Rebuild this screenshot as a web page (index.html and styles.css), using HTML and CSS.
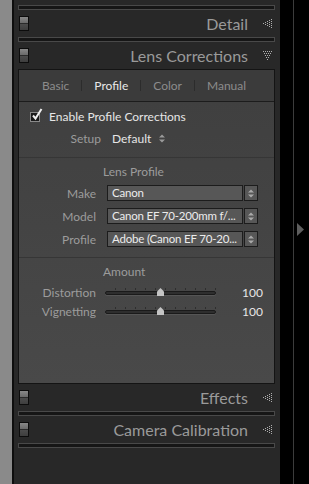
FILE: index.html
```html
<!doctype html>
<html>

<head>
    <title>Lens Corrections</title>
    <link rel="stylesheet" href="styles.css">
</head>

<body>
    <div class="filmstrip"></div>
    <div class="panel">
        <div class="bar"></div>
        <div class="header">
            <span class="toggle"></span>
            <span class="title">Detail</span>
            <svg class="tri" width="9" height="9" viewBox="0 0 9 9">
                <rect x="0" y="4" width="1" height="1" />
                <rect x="2" y="3" width="1" height="1" /><rect x="2" y="5" width="1" height="1" />
                <rect x="4" y="2" width="1" height="1" /><rect x="4" y="4" width="1" height="1" /><rect x="4" y="6" width="1" height="1" />
                <rect x="6" y="1" width="1" height="1" /><rect x="6" y="3" width="1" height="1" /><rect x="6" y="5" width="1" height="1" /><rect x="6" y="7" width="1" height="1" />
                <rect x="8" y="0" width="1" height="1" /><rect x="8" y="2" width="1" height="1" /><rect x="8" y="4" width="1" height="1" /><rect x="8" y="6" width="1" height="1" /><rect x="8" y="8" width="1" height="1" />
            </svg>
        </div>
        <div class="bar"></div>
        <div class="header">
            <span class="toggle"></span>
            <span class="title">Lens Corrections</span>
            <svg class="tri" width="9" height="9" viewBox="0 0 9 9">
                <rect y="0" x="0" width="1" height="1" /><rect y="0" x="2" width="1" height="1" /><rect y="0" x="4" width="1" height="1" /><rect y="0" x="6" width="1" height="1" /><rect y="0" x="8" width="1" height="1" />
                <rect y="2" x="1" width="1" height="1" /><rect y="2" x="3" width="1" height="1" /><rect y="2" x="5" width="1" height="1" /><rect y="2" x="7" width="1" height="1" />
                <rect y="4" x="2" width="1" height="1" /><rect y="4" x="4" width="1" height="1" /><rect y="4" x="6" width="1" height="1" />
                <rect y="6" x="3" width="1" height="1" /><rect y="6" x="5" width="1" height="1" />
                <rect y="8" x="4" width="1" height="1" />
            </svg>
        </div>

        <div class="section-body">
            <div class="tabs">
                <span class="tab">Basic</span>
                <span class="sep"></span>
                <span class="tab active">Profile</span>
                <span class="sep"></span>
                <span class="tab">Color</span>
                <span class="sep"></span>
                <span class="tab">Manual</span>
            </div>

            <div class="check-row">
                <span class="checkbox">
                    <svg width="12" height="13" viewBox="0 0 12 13">
                        <path d="M2 7.5 L4.5 10.5 L10.5 1" fill="none" stroke="#f0f0f0" stroke-width="2" />
                    </svg>
                </span>
                <span class="check-label">Enable Profile Corrections</span>
            </div>

            <div class="setup-row">
                <span class="label setup-label">Setup</span>
                <span class="value">Default</span>
                <svg class="updown" width="6" height="9" viewBox="0 0 6 9">
                    <path d="M0 3.5 L3 0.5 L6 3.5 Z M0 5.5 L3 8.5 L6 5.5 Z" fill="#9a9a9a" />
                </svg>
            </div>

            <div class="divider"></div>

            <div class="group-title">Lens Profile</div>
            <div class="field-row">
                <span class="label">Make</span>
                <span class="select">Canon</span>
                <span class="stepper"><svg width="6" height="9" viewBox="0 0 6 9"><path d="M0 3.5 L3 0.5 L6 3.5 Z M0 5.5 L3 8.5 L6 5.5 Z" fill="#aaa" /></svg></span>
            </div>
            <div class="field-row">
                <span class="label">Model</span>
                <span class="select">Canon EF 70-200mm f/...</span>
                <span class="stepper"><svg width="6" height="9" viewBox="0 0 6 9"><path d="M0 3.5 L3 0.5 L6 3.5 Z M0 5.5 L3 8.5 L6 5.5 Z" fill="#aaa" /></svg></span>
            </div>
            <div class="field-row">
                <span class="label">Profile</span>
                <span class="select">Adobe (Canon EF 70-20...</span>
                <span class="stepper"><svg width="6" height="9" viewBox="0 0 6 9"><path d="M0 3.5 L3 0.5 L6 3.5 Z M0 5.5 L3 8.5 L6 5.5 Z" fill="#aaa" /></svg></span>
            </div>

            <div class="divider second"></div>

            <div class="group-title amount">Amount</div>
            <div class="slider-row">
                <span class="label">Distortion</span>
                <div class="slider">
                    <div class="track"></div>
                    <svg class="thumb" width="7" height="8" viewBox="0 0 7 8"><path d="M3.5 0 L7 3.5 L7 8 L0 8 L0 3.5 Z" fill="#c4c4c4" /></svg>
                </div>
                <span class="num">100</span>
            </div>
            <div class="slider-row">
                <span class="label">Vignetting</span>
                <div class="slider">
                    <div class="track"></div>
                    <svg class="thumb" width="7" height="8" viewBox="0 0 7 8"><path d="M3.5 0 L7 3.5 L7 8 L0 8 L0 3.5 Z" fill="#c4c4c4" /></svg>
                </div>
                <span class="num">100</span>
            </div>
        </div>

        <div class="header">
            <span class="toggle"></span>
            <span class="title">Effects</span>
            <svg class="tri" width="9" height="9" viewBox="0 0 9 9">
                <rect x="0" y="4" width="1" height="1" />
                <rect x="2" y="3" width="1" height="1" /><rect x="2" y="5" width="1" height="1" />
                <rect x="4" y="2" width="1" height="1" /><rect x="4" y="4" width="1" height="1" /><rect x="4" y="6" width="1" height="1" />
                <rect x="6" y="1" width="1" height="1" /><rect x="6" y="3" width="1" height="1" /><rect x="6" y="5" width="1" height="1" /><rect x="6" y="7" width="1" height="1" />
                <rect x="8" y="0" width="1" height="1" /><rect x="8" y="2" width="1" height="1" /><rect x="8" y="4" width="1" height="1" /><rect x="8" y="6" width="1" height="1" /><rect x="8" y="8" width="1" height="1" />
            </svg>
        </div>
        <div class="bar"></div>
        <div class="header">
            <span class="toggle"></span>
            <span class="title">Camera Calibration</span>
            <svg class="tri" width="9" height="9" viewBox="0 0 9 9">
                <rect x="0" y="4" width="1" height="1" />
                <rect x="2" y="3" width="1" height="1" /><rect x="2" y="5" width="1" height="1" />
                <rect x="4" y="2" width="1" height="1" /><rect x="4" y="4" width="1" height="1" /><rect x="4" y="6" width="1" height="1" />
                <rect x="6" y="1" width="1" height="1" /><rect x="6" y="3" width="1" height="1" /><rect x="6" y="5" width="1" height="1" /><rect x="6" y="7" width="1" height="1" />
                <rect x="8" y="0" width="1" height="1" /><rect x="8" y="2" width="1" height="1" /><rect x="8" y="4" width="1" height="1" /><rect x="8" y="6" width="1" height="1" /><rect x="8" y="8" width="1" height="1" />
            </svg>
        </div>
        <div class="bar"></div>
    </div>
    <div class="gutter"></div>
    <div class="edge">
        <svg width="7" height="13" viewBox="0 0 7 13"><path d="M0 0 L7 6.5 L0 13 Z" fill="#5e5e5e" /></svg>
    </div>
</body>

</html>
```

FILE: styles.css
```css
html,
body {
    background-color: #000;
}

body {
    margin: 0;
    display: flex;
    width: 309px;
    height: 484px;
    overflow: hidden;
    font-family: Lato, "Liberation Sans", sans-serif;
}

.filmstrip {
    width: 12px;
    background: #8a8a8a;
    border-right: 2px solid #0e0e0e;
}

.panel {
    width: 257px;
    padding: 5px 5px 0 4px;
    background: #282828;
    display: flex;
    flex-direction: column;
}

.gutter {
    width: 13px;
    border-right: 1px solid #3c3c3c;
}

.edge {
    flex: 1;
    display: flex;
    align-items: center;
    padding-left: 3px;
    padding-bottom: 26px;
}

.bar {
    height: 3px;
    background: #161616;
    border: 1px solid #494949;
}

.header {
    height: 27px;
    display: flex;
    align-items: center;
    padding: 0 3px 0 1px;
}

.toggle {
    width: 8px;
    height: 13px;
    border: 1px solid #0c0c0c;
    background: linear-gradient(#888 0, #6a6a6a 6px, #2a2a2a 6px, #2a2a2a 7px, #4c4c4c 7px, #3e3e3e 100%);
}

.title {
    flex: 1;
    text-align: right;
    font-size: 16px;
    color: #9a9a9a;
    padding-right: 15px;
}

.tri {
    fill: #b0b0b0;
}

.section-body {
    height: 313px;
    border: 1px solid #141414;
    background: linear-gradient(#3f3f3f, #494949);
    display: flex;
    flex-direction: column;
}

.tabs {
    height: 31px;
    border-bottom: 1px solid #1c1c1c;
    background: #3b3b3b;
    display: flex;
    align-items: center;
    justify-content: center;
    gap: 12px;
    padding-right: 5px;
    font-size: 12px;
    color: #8c8c8c;
}

.tab.active {
    color: #e8e8e8;
}

.sep {
    width: 1px;
    height: 11px;
    background: #2c2c2c;
}

.check-row {
    height: 28px;
    display: flex;
    align-items: center;
    padding-left: 11px;
    gap: 9px;
}

.checkbox {
    width: 8px;
    height: 8px;
    margin-top: 1px;
    border: 1px solid #8a8a8a;
    background: #1a1a1a;
    position: relative;
}

.checkbox svg {
    position: absolute;
    left: 0;
    top: -5px;
}

.check-label {
    font-size: 12px;
    color: #e6e6e6;
}

.setup-row {
    height: 17px;
    display: flex;
    align-items: center;
    font-size: 12px;
}

.label {
    width: 77px;
    text-align: right;
    color: #9c9c9c;
    font-size: 12px;
    flex: none;
}

.setup-label {
    width: 82px;
    margin-right: 11px;
}

.value {
    color: #e6e6e6;
    margin-right: 8px;
}

.divider {
    height: 0;
    margin-top: 10px;
    border-top: 1px solid #363636;
}

.divider.second {
    margin-top: 10px;
}

.group-title {
    margin-top: 7px;
    height: 14px;
    line-height: 14px;
    font-size: 12px;
    color: #9c9c9c;
    padding-left: 84px;
}

.group-title.amount {
    padding-left: 84px;
}

.field-row {
    margin-top: 6px;
    display: flex;
    align-items: center;
    height: 16px;
}

.field-row + .field-row {
    margin-top: 7px;
}

.field-row .select {
    margin-left: 11px;
    width: 130px;
    height: 14px;
    line-height: 14px;
    padding-left: 4px;
    border: 1px solid #1c1c1c;
    background: #575757;
    color: #ececec;
    font-size: 11.5px;
    letter-spacing: -0.2px;
    white-space: nowrap;
    overflow: hidden;
}

.stepper {
    margin-left: 1px;
    width: 12px;
    height: 14px;
    border: 1px solid #1c1c1c;
    background: #575757;
    display: flex;
    align-items: center;
    justify-content: center;
}

.slider-row {
    margin-top: 6px;
    height: 14px;
    display: flex;
    align-items: center;
}

.slider-row + .slider-row {
    margin-top: 5px;
}

.slider {
    margin-left: 9px;
    width: 111px;
    height: 14px;
    position: relative;
    background: repeating-linear-gradient(90deg, transparent 0, transparent 9px, #2e2e2e 9px, #2e2e2e 10px) 1px 3px / 110px 2px no-repeat;
}

.track {
    position: absolute;
    left: 0;
    right: 0;
    top: 6px;
    height: 2px;
    border: 1px solid #1a1a1a;
    border-radius: 2px;
    background: #2e2e2e;
    box-shadow: 0 1px 0 #555;
}

.thumb {
    position: absolute;
    left: 52px;
    top: 3px;
}

.num {
    margin-left: 26px;
    width: 17px;
    text-align: right;
    color: #e6e6e6;
    font-size: 12px;
}
```
